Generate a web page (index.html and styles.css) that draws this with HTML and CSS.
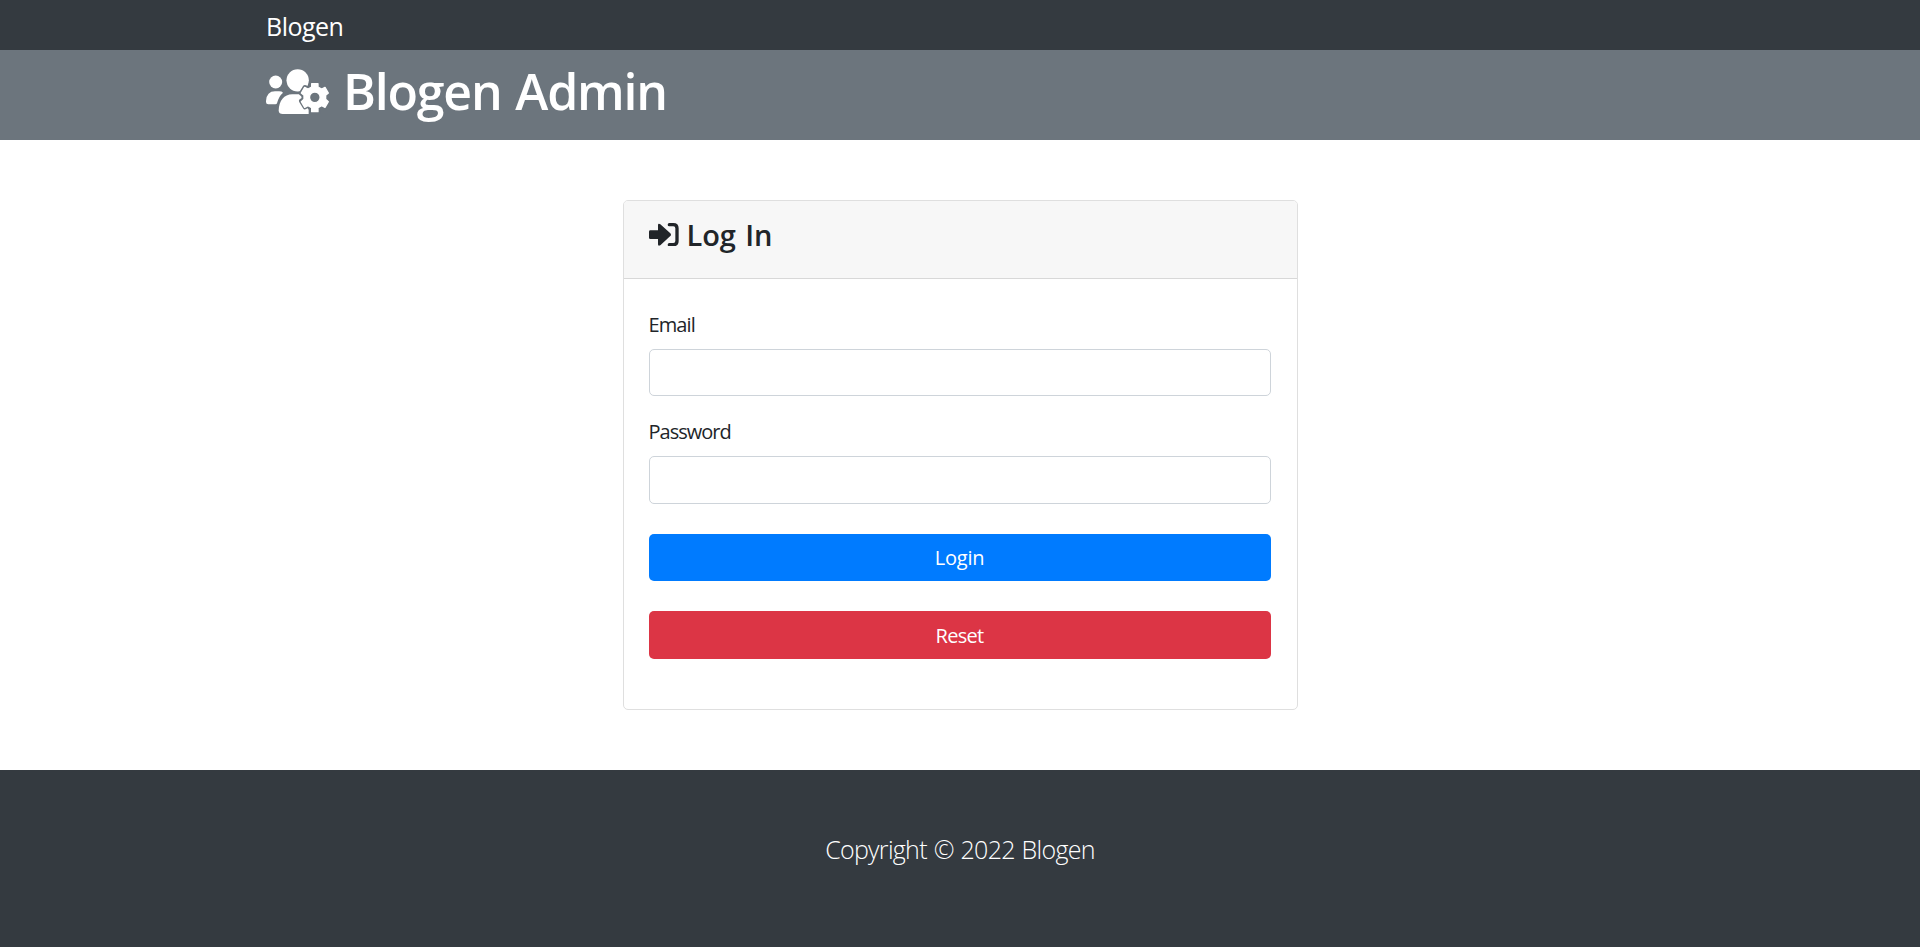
FILE: index.html
```html
<!DOCTYPE html>
<html lang="en">
<head>
<meta charset="utf-8">
<title>Blogen</title>
<link rel="stylesheet" href="styles.css">
</head>
<body>
<nav class="navbar"><div class="container"><a class="brand">Blogen</a></div></nav>
<header class="banner">
  <div class="container">
    <h1 class="banner-title">
      <svg class="icon-users" viewBox="0 0 192 137" aria-hidden="true">
        <circle cx="29" cy="39" r="19.5"/>
        <circle cx="95" cy="34" r="33.5"/>
        <path d="M0 96Q2 67 27 67H39Q48 67 51 71Q38 82 33 103Q32 106 28 106H7Q0 106 0 99Z"/>
        <path d="M38 124C39 96 54 76 79 76H104L112 100L128 122V135H50Q39 135 38 125Z"/>
        <path class="gear-gap" d="M136 44H157V54L167 60L176 55L187 73L179 79V91L187 96L177 114L167 109L157 115V129H136V115L126 109L117 114L106 96L114 91V79L106 73L117 55L126 60L136 54Z"/>
        <path class="gear" fill-rule="evenodd" d="M137 44H156V54L167 60L177 55L187 72L179 79V91L187 98L177 115L167 110L156 116V128H137V116L126 110L116 115L106 98L114 91V79L106 72L116 55L126 60L137 54ZM146.500 69A16 16 0 1 0 146.500 101A16 16 0 1 0 146.500 69Z"/>
      </svg>
      <span class="banner-text">Blogen Admin</span>
    </h1>
  </div>
</header>
<main class="content">
  <section class="card">
    <div class="card-header">
      <h4 class="card-title">
        <svg class="icon-login" viewBox="0 0 90 70" aria-hidden="true">
          <path d="M4 22H27V7Q27 0 34 4L64 31Q68 35 64 39L34 67Q27 71 27 64V48H4Q0 48 0 44V26Q0 22 4 22Z"/>
          <path class="bracket" d="M61 5H73Q84 5 84 16V54Q84 65 73 65H61"/>
        </svg>
        <span class="card-text">Log In</span>
      </h4>
    </div>
    <form class="card-body">
      <label class="label label-email" for="email">Email</label>
      <input class="input" id="email" type="email">
      <label class="label" for="password">Password</label>
      <input class="input input-last" id="password" type="password">
      <button class="btn btn-primary" type="button">Login</button>
      <button class="btn btn-danger" type="reset">Reset</button>
    </form>
  </section>
</main>
<footer class="footer"><p class="copyright">Copyright © 2022 Blogen</p></footer>
</body>
</html>
```
FILE: styles.css
```css
* { box-sizing: border-box; }
body {
  margin: 0;
  min-height: 947px;
  display: flex;
  flex-direction: column;
  background: #fff;
  color: #212529;
  font-family: "Open Sans", "Noto Sans", sans-serif;
  font-size: 20px;
}
.container { width: 1388px; margin: 0 auto; }
.navbar { height: 50px; background: #343a40; color: #fff; }
.brand { display: block; font-size: 25px; letter-spacing: -.5px; line-height: 52px; }
.banner { height: 90px; background: #6c757d; color: #fff; }
.banner-title {
  display: flex;
  margin: 0;
  padding-top: 11px;
  font-size: 50px;
  font-weight: 600;
  letter-spacing: -1.2px;
  word-spacing: 2px;
  line-height: 60px;
}
.icon-users { width: 64px; height: 45.67px; margin: 7.500px 13px 0 0; fill: currentColor; }
.gear-gap { fill: #6c757d; stroke: #6c757d; stroke-width: 14; stroke-linejoin: round; }
.gear { stroke: currentColor; stroke-width: 4; stroke-linejoin: round; }
.content { height: 630px; padding-top: 60px; }
.card {
  width: 675px;
  height: 510px;
  margin: 0 auto;
  border: 1px solid #dfdfdf;
  border-radius: 5px;
}
.card-header {
  height: 78px;
  padding: 14px 25px;
  background: #f7f7f7;
  border-bottom: 1px solid #d8d8d8;
  border-radius: 4px 4px 0 0;
}
.card-title { display: flex; margin: 0; font-size: 29px; font-weight: 600; line-height: 40px; }
.card-text { letter-spacing: -.1px; word-spacing: 2px; }
.icon-login { width: 30px; height: 23.33px; margin: 8px 8px 0 0; fill: currentColor; }
.bracket { fill: none; stroke: currentColor; stroke-width: 10; stroke-linecap: round; }
.card-body { display: flex; flex-direction: column; padding: 30px 26px 30px 25px; }
.label { height: 40px; letter-spacing: -1px; line-height: 32px; }
.label-email { letter-spacing: -.9px; }
.input {
  height: 47px;
  margin: 0 0 20px;
  border: 1px solid #ced4da;
  border-radius: 5px;
  background: #fff;
}
.input-last { height: 48px; margin-bottom: 30px; }
.btn {
  height: 47px;
  margin: 0 0 30px;
  padding: 0;
  border: 0;
  border-radius: 5px;
  color: #fff;
  font: inherit;
  letter-spacing: -.25px;
  line-height: 47px;
}
.btn-primary { background: #007bff; }
.btn-danger { height: 48px; background: #dc3545; letter-spacing: -.7px; }
.footer { height: 177px; background: #343a40; color: #fff; text-align: center; }
.copyright { margin: 0; padding-top: 60px; font-size: 25px; font-weight: 300; letter-spacing: -.7px; word-spacing: 1px; line-height: 38px; }
```
